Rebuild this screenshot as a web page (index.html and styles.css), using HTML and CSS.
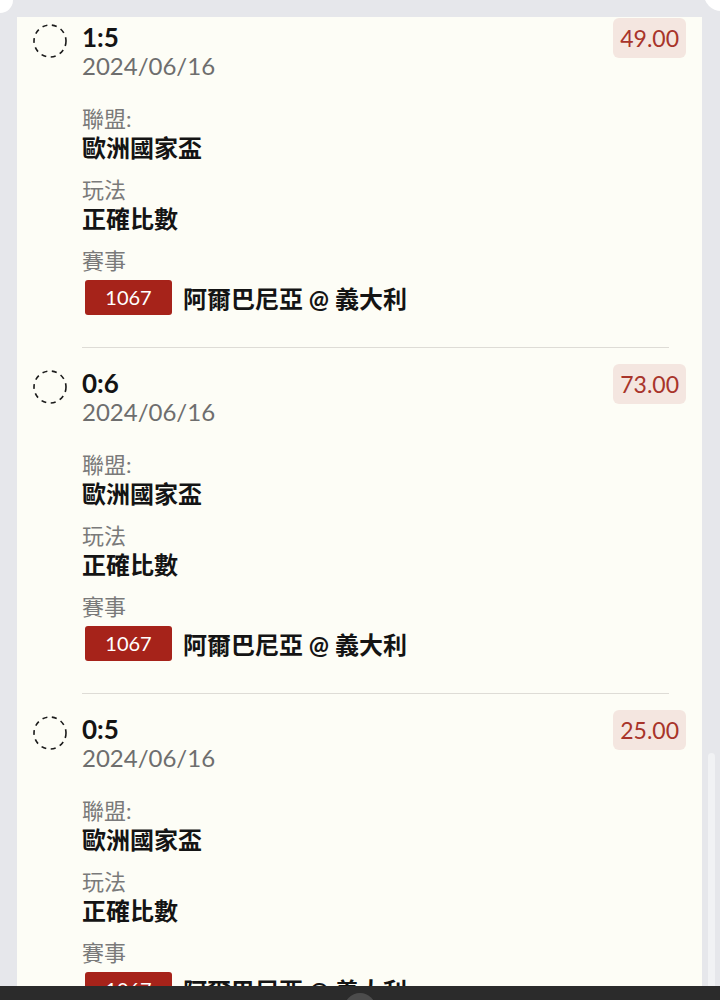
FILE: index.html
```html
<!DOCTYPE html>
<html lang="zh-Hant">
<head>
  <meta charset="UTF-8">
  <meta name="viewport" content="width=device-width, initial-scale=1.0">
  <title>注單</title>
  <link rel="stylesheet" href="styles.css">
</head>
<body>
  <div class="corner corner-left"></div>
  <div class="corner corner-right"></div>

  <div class="list">
    <div class="item">
      <svg class="check" width="34" height="34" viewBox="0 0 34 34"><circle cx="17" cy="17" r="16" fill="none" stroke="#1a1a1a" stroke-width="1.6" stroke-dasharray="5 4.6"/></svg>
      <div class="body">
        <div class="title">1:5</div>
        <div class="date">2024/06/16</div>
        <div class="field">
          <div class="label">聯盟:</div>
          <div class="value">歐洲國家盃</div>
        </div>
        <div class="field">
          <div class="label">玩法</div>
          <div class="value">正確比數</div>
        </div>
        <div class="field">
          <div class="label">賽事</div>
          <div class="match"><span class="code">1067</span><span class="teams">阿爾巴尼亞 @ 義大利</span></div>
        </div>
      </div>
      <div class="odds">49.00</div>
    </div>
    <div class="sep"></div>

    <div class="item">
      <svg class="check" width="34" height="34" viewBox="0 0 34 34"><circle cx="17" cy="17" r="16" fill="none" stroke="#1a1a1a" stroke-width="1.6" stroke-dasharray="5 4.6"/></svg>
      <div class="body">
        <div class="title">0:6</div>
        <div class="date">2024/06/16</div>
        <div class="field">
          <div class="label">聯盟:</div>
          <div class="value">歐洲國家盃</div>
        </div>
        <div class="field">
          <div class="label">玩法</div>
          <div class="value">正確比數</div>
        </div>
        <div class="field">
          <div class="label">賽事</div>
          <div class="match"><span class="code">1067</span><span class="teams">阿爾巴尼亞 @ 義大利</span></div>
        </div>
      </div>
      <div class="odds">73.00</div>
    </div>
    <div class="sep"></div>

    <div class="item">
      <svg class="check" width="34" height="34" viewBox="0 0 34 34"><circle cx="17" cy="17" r="16" fill="none" stroke="#1a1a1a" stroke-width="1.6" stroke-dasharray="5 4.6"/></svg>
      <div class="body">
        <div class="title">0:5</div>
        <div class="date">2024/06/16</div>
        <div class="field">
          <div class="label">聯盟:</div>
          <div class="value">歐洲國家盃</div>
        </div>
        <div class="field">
          <div class="label">玩法</div>
          <div class="value">正確比數</div>
        </div>
        <div class="field">
          <div class="label">賽事</div>
          <div class="match"><span class="code">1067</span><span class="teams">阿爾巴尼亞 @ 義大利</span></div>
        </div>
      </div>
      <div class="odds">25.00</div>
    </div>
  </div>

  <div class="scroll-thumb"></div>
  <div class="navbar"><div class="nav-dot"></div></div>
</body>
</html>
```

FILE: styles.css
```css
html, body { height: 1000px; overflow: hidden; }
body {
  margin: 0;
  background: #e6e7eb;
  font-family: "Lato", "Noto Sans CJK TC", sans-serif;
  color: #141414;
}

.corner { position: absolute; background: #fff; border-radius: 50%; }
.corner-left { width: 26px; height: 26px; left: -13px; top: -13px; }
.corner-right { width: 34px; height: 34px; left: 704px; top: -23px; }

.list {
  margin: 17px 18px 0 17px;
  background: #fdfdf6;
  min-height: 1000px;
}

.item {
  display: flex;
  align-items: flex-start;
  padding: 20px 16px 32px 16px;
}
.item:first-child { padding-top: 5px; }

.check { flex: none; margin-top: 2px; margin-right: 15px; }

.body { flex: 1; }

.title { font-size: 26px; font-weight: 700; line-height: 30px; }
.date { font-size: 24px; line-height: 28px; color: #6e6e6e; }

.field { margin-top: 13px; }
.date + .field { margin-top: 24px; }
.label { font-size: 22px; line-height: 29px; color: #7a7a7a; }
.value { font-size: 24px; line-height: 29px; font-weight: 700; }

.match { display: flex; align-items: center; margin-top: 5px; }
.code {
  margin-left: 3px;
  width: 87px;
  height: 35px;
  line-height: 35px;
  text-align: center;
  background: #a6231a;
  color: #fff;
  font-size: 20px;
  border-radius: 3px;
}
.teams { margin-left: 11px; font-size: 24px; font-weight: 700; }

.odds {
  flex: none;
  margin-top: -4px;
  height: 40px;
  line-height: 40px;
  padding: 0 7px;
  background: #f4e6e0;
  color: #a8342a;
  font-size: 23px;
  border-radius: 6px;
}

.sep { height: 1px; background: #dedcd6; margin: 0 33px 0 65px; }

.scroll-thumb {
  position: absolute;
  left: 708px;
  top: 753px;
  width: 7px;
  height: 240px;
  background: #f1f2f4;
  border-radius: 4px;
}

.navbar {
  position: fixed;
  left: 0; right: 0; bottom: 0;
  height: 14px;
  background: #2b2b2b;
  overflow: hidden;
}
.nav-dot {
  width: 32px;
  height: 32px;
  margin: 7px auto 0;
  border-radius: 50%;
  background: #4c4c4c;
}
```
